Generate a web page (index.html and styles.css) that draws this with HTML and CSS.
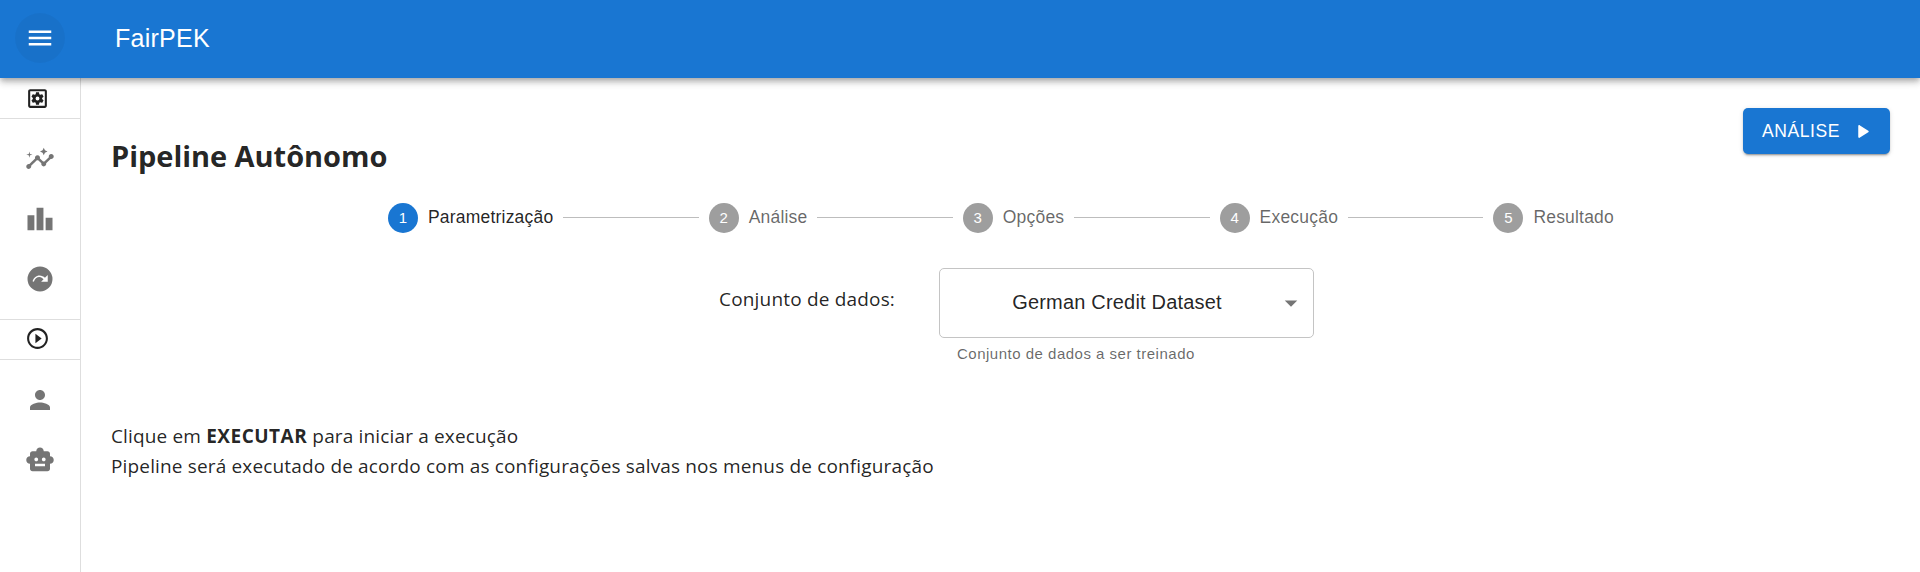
FILE: index.html
```html
<!DOCTYPE html>
<html lang="pt-BR">
<head>
<meta charset="utf-8">
<title>FairPEK</title>
<link rel="stylesheet" href="styles.css">
</head>
<body>
<header class="appbar">
  <button class="menu-button" aria-label="Menu">
    <svg class="icon" viewBox="0 0 24 24"><path d="M3 18h18v-2H3v2zm0-5h18v-2H3v2zm0-7v2h18V6H3z"/></svg>
  </button>
  <div class="brand">FairPEK</div>
</header>
<div class="layout">
  <nav class="sidebar">
    <div class="section-icon">
      <svg class="icon-small" viewBox="0 0 24 24"><path d="M19 3H5c-1.1 0-2 .9-2 2v14c0 1.1.9 2 2 2h14c1.1 0 2-.9 2-2V5c0-1.1-.9-2-2-2zm0 16H5V5h14v14z"/><path transform="translate(4.56 4.56) scale(.62)" d="M19.14 12.94c.04-.3.06-.61.06-.94 0-.32-.02-.64-.07-.94l2.03-1.58c.18-.14.23-.41.12-.61l-1.92-3.32c-.12-.22-.37-.29-.59-.22l-2.39.96c-.5-.38-1.03-.7-1.62-.94l-.36-2.54c-.04-.24-.24-.41-.48-.41h-3.84c-.24 0-.43.17-.47.41l-.36 2.54c-.59.24-1.13.57-1.62.94l-2.39-.96c-.22-.08-.47 0-.59.22L2.74 8.87c-.12.21-.08.47.12.61l2.03 1.58c-.05.3-.09.63-.09.94s.02.64.07.94l-2.03 1.58c-.18.14-.23.41-.12.61l1.92 3.32c.12.22.37.29.59.22l2.39-.96c.5.38 1.03.7 1.62.94l.36 2.54c.05.24.24.41.48.41h3.84c.24 0 .44-.17.47-.41l.36-2.54c.59-.24 1.13-.56 1.62-.94l2.39.96c.22.08.47 0 .59-.22l1.92-3.32c.12-.22.07-.47-.12-.61l-2.01-1.58zM12 15a3 3 0 1 1 0-6 3 3 0 0 1 0 6z"/></svg>
    </div>
    <div class="nav-group">
      <a class="nav-item"><svg class="icon" viewBox="0 0 24 24"><path d="M21 8c-1.45 0-2.26 1.44-1.93 2.51l-3.55 3.56c-.3-.09-.74-.09-1.04 0l-2.55-2.55C12.27 10.45 11.46 9 10 9c-1.45 0-2.27 1.44-1.93 2.52l-4.56 4.55C2.44 15.74 1 16.55 1 18c0 1.1.9 2 2 2 1.45 0 2.26-1.44 1.93-2.51l4.55-4.56c.3.09.74.09 1.04 0l2.55 2.55C12.73 16.55 13.54 18 15 18c1.45 0 2.27-1.44 1.93-2.52l3.56-3.55C21.56 12.26 23 11.45 23 10c0-1.1-.9-2-2-2z"/><path d="m15 9 .94-2.07L18 6l-2.06-.93L15 3l-.92 2.07L12 6l2.08.93zM3.5 11 4 9l2-.5L4 8l-.5-2L3 8l-2 .5L3 9z"/></svg></a>
      <a class="nav-item"><svg class="icon" viewBox="0 0 24 24"><path d="M7.5 21H2V9h5.5v12zm7.25-18h-5.5v18h5.5V3zM22 11h-5.5v10H22V11z"/></svg></a>
      <a class="nav-item"><svg class="icon" viewBox="0 0 24 24"><path fill-rule="evenodd" d="M12 2a10 10 0 1 0 0 20 10 10 0 0 0 0-20zm6.2 12.1h-5.3l1.95-1.95C14 11.2 12.9 10.3 11.500 10.300c-2.050 0-3.750 1.550-4.400 3.850L6 13.800c.85-2.700 2.900-4.700 5.700-4.700 1.600 0 3.100.75 4.250 1.850L18.200 8.700v5.400z"/></svg></a>
    </div>
    <div class="section-icon section-icon-ruled">
      <svg class="icon-small" viewBox="0 0 24 24"><path d="m10 16.500 6-4.500-6-4.500v9zM12 2C6.480 2 2 6.480 2 12s4.480 10 10 10 10-4.480 10-10S17.520 2 12 2zm0 18c-4.410 0-8-3.590-8-8s3.590-8 8-8 8 3.590 8 8-3.590 8-8 8z"/></svg>
    </div>
    <div class="nav-group">
      <a class="nav-item"><svg class="icon" viewBox="0 0 24 24"><path d="M12 12c2.210 0 4-1.790 4-4s-1.790-4-4-4-4 1.790-4 4 1.790 4 4 4zm0 2c-2.670 0-8 1.340-8 4v2h16v-2c0-2.660-5.330-4-8-4z"/></svg></a>
      <a class="nav-item"><svg class="icon" viewBox="0 0 24 24"><path d="M20 9V7c0-1.100-.9-2-2-2h-3c0-1.660-1.340-3-3-3S9 3.340 9 5H6c-1.100 0-2 .9-2 2v2c-1.660 0-3 1.340-3 3s1.340 3 3 3v4c0 1.100.9 2 2 2h12c1.100 0 2-.9 2-2v-4c1.660 0 3-1.340 3-3s-1.340-3-3-3zM7.500 11.500c0-.83.67-1.500 1.500-1.500s1.500.67 1.500 1.500S9.830 13 9 13s-1.500-.67-1.500-1.500zM16 17H8v-2h8v2zm-1-4c-.83 0-1.500-.67-1.500-1.500S14.170 10 15 10s1.500.67 1.500 1.500S15.830 13 15 13z"/></svg></a>
    </div>
  </nav>
  <main class="content">
    <div class="title-row">
      <h1 class="title">Pipeline Autônomo</h1>
      <button class="action">ANÁLISE
        <svg class="action-icon" viewBox="0 0 10.500 13"><path d="M0 1.200C0 .2.9-.2 1.700.4L10 5.700c.6.4.6 1.200 0 1.600l-8.300 5.300C.9 13.200 0 12.800 0 11.800z"/></svg>
      </button>
    </div>
    <div class="stepper">
      <div class="step step-active"><span class="step-number">1</span><span class="step-label">Parametrização</span></div>
      <div class="connector"></div>
      <div class="step"><span class="step-number">2</span><span class="step-label">Análise</span></div>
      <div class="connector"></div>
      <div class="step"><span class="step-number">3</span><span class="step-label">Opções</span></div>
      <div class="connector"></div>
      <div class="step"><span class="step-number">4</span><span class="step-label">Execução</span></div>
      <div class="connector"></div>
      <div class="step"><span class="step-number">5</span><span class="step-label">Resultado</span></div>
    </div>
    <div class="field">
      <label class="field-label">Conjunto de dados:</label>
      <div class="control">
        <div class="select">
          <span class="select-value">German Credit Dataset</span>
          <svg class="icon select-arrow" viewBox="0 0 24 24"><path d="m7 10 5 5 5-5z"/></svg>
        </div>
        <div class="helper">Conjunto de dados a ser treinado</div>
      </div>
    </div>
    <div class="notes">
      <div>Clique em <strong>EXECUTAR</strong> para iniciar a execução</div>
      <div>Pipeline será executado de acordo com as configurações salvas nos menus de configuração</div>
    </div>
  </main>
</div>
</body>
</html>
```
FILE: styles.css
```css
* { box-sizing: border-box; }
body {
  margin: 0;
  height: 572px;
  overflow: hidden;
  display: flex;
  flex-direction: column;
  background: #fff;
  color: rgba(0, 0, 0, 0.87);
  font-family: "Liberation Sans", Arial, sans-serif;
}
button { border: 0; font-family: inherit; }
svg { display: block; fill: currentColor; flex: none; }
.icon { width: 30px; height: 30px; }
.icon-small { width: 25px; height: 25px; }

.appbar {
  position: relative;
  z-index: 1;
  flex: none;
  height: 78px;
  padding: 0 0 2px 15px;
  display: flex;
  align-items: center;
  gap: 50px;
  background: #1976d2;
  color: #fff;
  box-shadow: 0 2.500px 5px -1px rgba(0, 0, 0, 0.2), 0 5px 6px rgba(0, 0, 0, 0.14), 0 1px 12px rgba(0, 0, 0, 0.12);
}
.menu-button {
  width: 50px;
  height: 50px;
  padding: 10px;
  border-radius: 50%;
  background: rgba(0, 0, 0, 0.04);
  color: #fff;
}
.brand { font-size: 25px; line-height: 40px; letter-spacing: 0.25px; }

.layout { flex: 1; display: flex; min-height: 0; }
.sidebar { width: 81px; flex: none; border-right: 1px solid #dedede; }
.section-icon { height: 41px; padding: 8px 0 0 25px; border-bottom: 1px solid #dedede; color: rgba(0, 0, 0, 0.87); }
.section-icon-ruled { border-top: 1px solid #dedede; padding-top: 6px; }
.nav-group { padding: 10px 0; color: #757575; }
.nav-item { display: flex; height: 60px; align-items: center; justify-content: center; }
.section-icon + .nav-group { height: 200px; }

.content { flex: 1; padding: 30px 30px 0 31px; display: flex; flex-direction: column; }
.title-row { display: flex; justify-content: space-between; align-items: flex-start; height: 95px; }
.title {
  margin: 28px 0 0 -1px;
  font: bold 29px/40px "Open Sans", "Noto Sans", sans-serif;
  letter-spacing: -0.04px;
}
.action {
  width: 147px;
  height: 46px;
  padding: 0 21px 0 19px;
  display: flex;
  align-items: center;
  justify-content: space-between;
  border-radius: 5px;
  background: #1976d2;
  color: #fff;
  font-size: 17.500px;
  letter-spacing: 0.6px;
  box-shadow: 0 3px 1px -2px rgba(0, 0, 0, 0.2), 0 2px 2px rgba(0, 0, 0, 0.14), 0 1px 5px rgba(0, 0, 0, 0.12);
}
.action-icon { width: 11px; height: 13px; }

.stepper { width: 1226px; margin-left: 276px; height: 30px; display: flex; align-items: center; gap: 10px; }
.step { display: flex; align-items: center; gap: 10px; color: rgba(0, 0, 0, 0.6); white-space: nowrap; }
.step-label { padding-bottom: 2px; font-size: 17.500px; line-height: 25px; letter-spacing: 0.2px; }
.step-active { color: rgba(0, 0, 0, 0.87); }
.step-number {
  width: 30px;
  height: 30px;
  border-radius: 50%;
  background: #9e9e9e;
  color: #fff;
  font-size: 15px;
  line-height: 30px;
  text-align: center;
}
.step-active .step-number { background: #1976d2; }
.connector { flex: 1; height: 1px; margin-bottom: 1px; background: #bdbdbd; }

.field { display: flex; gap: 44px; margin: 35px 0 0 607px; }
.field-label { width: 176px; padding-top: 16px; font: 19px/30px "Open Sans", "Noto Sans", sans-serif; letter-spacing: 0.18px; white-space: nowrap; }
.select {
  width: 375px;
  height: 70px;
  padding: 0 7px 0 18px;
  display: flex;
  align-items: center;
  border: 1px solid #c4c4c4;
  border-radius: 5px;
}
.select-value { flex: 1; padding-bottom: 2px; text-align: center; font-size: 20px; letter-spacing: 0.19px; }
.select-arrow { color: #757575; }
.helper { padding: 3px 0 0 18px; font-size: 15px; line-height: 25px; letter-spacing: 0.5px; color: rgba(0, 0, 0, 0.6); }

.notes { margin: 55px 0 0 -1px; font: 19px/30px "Open Sans", "Noto Sans", sans-serif; letter-spacing: 0.155px; white-space: nowrap; }
.notes strong { letter-spacing: 0.5px; }
```
